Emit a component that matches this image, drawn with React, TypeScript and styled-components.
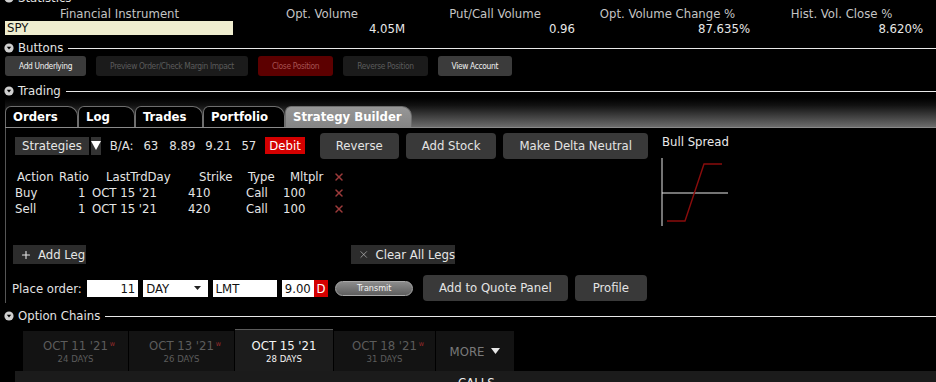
import styled, { createGlobalStyle } from "styled-components";
import { Plus, X } from "lucide-react";

const GlobalStyle = createGlobalStyle`
  html, body {
    margin: 0;
    padding: 0;
    background: #000;
  }
  body {
    width: 936px;
    height: 382px;
    overflow: hidden;
    font-family: "DejaVu Sans Condensed", "DejaVu Sans", sans-serif;
    font-stretch: condensed;
    font-size: 13px;
    color: #dedede;
    white-space: nowrap;
  }
  * {
    box-sizing: border-box;
  }
`;

const stats = [
  { label: "Opt. Volume", value: "4.05M", w: 176 },
  { label: "Put/Call Volume", value: "0.96", w: 170 },
  { label: "Opt. Volume Change %", value: "87.635%", w: 175 },
  { label: "Hist. Vol. Close %", value: "8.620%", w: 173 },
];

const legs = [
  { action: "Buy", ratio: "1", day: "OCT 15 '21", strike: "410", type: "Call", mult: "100" },
  { action: "Sell", ratio: "1", day: "OCT 15 '21", strike: "420", type: "Call", mult: "100" },
];

const expiries = [
  { date: "OCT 11 '21", days: "24 DAYS", weekly: true, w: 105 },
  { date: "OCT 13 '21", days: "26 DAYS", weekly: true, w: 105 },
  { date: "OCT 15 '21", days: "28 DAYS", weekly: false, w: 98, active: true },
  { date: "OCT 18 '21", days: "31 DAYS", weekly: true, w: 101 },
];

function SectionIcon() {
  return (
    <svg width="10" height="10" viewBox="0 0 10 10">
      <circle cx="5" cy="5" r="4.6" fill="#cfcfcf" />
      <polygon points="2.8,3.8 7.2,3.8 5,6.6" fill="#000" />
    </svg>
  );
}

function Section({ title, mt }: { title: string; mt: number }) {
  return (
    <SectionHeader $mt={mt}>
      <SectionIcon />
      <span>{title}</span>
      <SectionLine />
    </SectionHeader>
  );
}

function RemoveIcon() {
  return <X size={12} strokeWidth={3} color="#9c3a3a" />;
}

export default function App() {
  return (
    <Page>
      <GlobalStyle />
      <Section title="Statistics" mt={-9} />
      <StatsGrid>
        <StatHead $w={229}>Financial Instrument</StatHead>
        {stats.map((s) => (
          <StatHead key={s.label} $w={s.w}>
            {s.label}
          </StatHead>
        ))}
        <SymbolCell>SPY</SymbolCell>
        {stats.map((s) => (
          <StatValue key={s.label}>{s.value}</StatValue>
        ))}
      </StatsGrid>

      <Section title="Buttons" mt={5} />
      <ButtonBar>
        <ToolButton $kind="normal">Add Underlying</ToolButton>
        <ToolButton $kind="disabled">Preview Order/Check Margin Impact</ToolButton>
        <ToolButton $kind="danger">Close Position</ToolButton>
        <ToolButton $kind="disabled">Reverse Position</ToolButton>
        <ToolButton $kind="normal">View Account</ToolButton>
      </ButtonBar>

      <Section title="Trading" mt={8} />
      <TradingPanel>
        <TabBar>
          <Tab $w={73}>Orders</Tab>
          <Tab $w={57}>Log</Tab>
          <Tab $w={68}>Trades</Tab>
          <Tab $w={82}>Portfolio</Tab>
          <Tab $w={127} $active>
            Strategy Builder
          </Tab>
        </TabBar>
        <TradingBody>
          <LeftCol>
            <StrategyRow>
              <StrategyBox>Strategies</StrategyBox>
              <ArrowBox>
                <svg width="10" height="9" viewBox="0 0 10 9">
                  <polygon points="0,0 10,0 5,9" fill="#fff" />
                </svg>
              </ArrowBox>
              <Quote $ml={9}>B/A:</Quote>
              <Quote $ml={10}>63</Quote>
              <Quote $ml={11}>8.89</Quote>
              <Quote $ml={10}>9.21</Quote>
              <Quote $ml={10}>57</Quote>
              <DebitTag>Debit</DebitTag>
              <StrategyButtons>
                <GrayButton>Reverse</GrayButton>
                <GrayButton>Add Stock</GrayButton>
                <GrayButton>Make Delta Neutral</GrayButton>
              </StrategyButtons>
            </StrategyRow>

            <LegTable>
              <LegCell $pl={2}>Action</LegCell>
              <LegCell $pl={2}>Ratio</LegCell>
              <LegCell $pl={18}>LastTrdDay</LegCell>
              <LegCell $pl={19}>Strike</LegCell>
              <LegCell $pl={8}>Type</LegCell>
              <LegCell $pl={7}>Mltplr</LegCell>
              <LegCell $pl={3}>
                <RemoveIcon />
              </LegCell>
              {legs.map((l) => (
                <LegRow key={l.action}>
                  <LegCell $pl={0}>{l.action}</LegCell>
                  <LegCell $pl={21}>{l.ratio}</LegCell>
                  <LegCell $pl={4}>{l.day}</LegCell>
                  <LegCell $pl={8}>{l.strike}</LegCell>
                  <LegCell $pl={6}>{l.type}</LegCell>
                  <LegCell $pl={0}>{l.mult}</LegCell>
                  <LegCell $pl={3}>
                    <RemoveIcon />
                  </LegCell>
                </LegRow>
              ))}
            </LegTable>

            <LegActions>
              <FlatButton $w={73}>
                <Plus size={12} strokeWidth={2.2} color="#e6e6e6" />
                Add Leg
              </FlatButton>
              <FlatButton $w={104} $ml={265}>
                <X size={13} strokeWidth={1.3} color="#cfcfcf" />
                Clear All Legs
              </FlatButton>
            </LegActions>

            <OrderRow>
              <OrderLabel>Place order:</OrderLabel>
              <Field $w={53} $align="right">11</Field>
              <Field $w={66} $ml={5}>
                DAY
                <svg width="7" height="4" viewBox="0 0 7 4">
                  <polygon points="0,0 7,0 3.5,4" fill="#222" />
                </svg>
              </Field>
              <Field $w={66} $ml={5}>LMT</Field>
              <Field $w={32} $ml={5} $align="right">9.00</Field>
              <SideTag>D</SideTag>
              <TransmitPill>Transmit</TransmitPill>
              <GrayButton $ml={10}>Add to Quote Panel</GrayButton>
              <GrayButton $ml={7} $pad={18}>Profile</GrayButton>
            </OrderRow>
          </LeftCol>

          <ChartCol>
            <ChartTitle>Bull Spread</ChartTitle>
            <svg width="72" height="72" viewBox="0 0 72 72">
              <line x1="2" y1="2" x2="2" y2="70" stroke="#e8e8e8" strokeWidth="1" />
              <line x1="2" y1="37" x2="68" y2="37" stroke="#e8e8e8" strokeWidth="1" />
              <polyline
                points="7,65 25,65 44,8 62,8"
                fill="none"
                stroke="#8a0c0c"
                strokeWidth="1.4"
              />
            </svg>
          </ChartCol>
        </TradingBody>
      </TradingPanel>

      <Section title="Option Chains" mt={6} />
      <ExpiryTabs>
        {expiries.map((e) => (
          <ExpiryTab key={e.date} $w={e.w} $active={e.active}>
            <ExpiryDate>
              {e.date}
              {e.weekly && <Weekly>w</Weekly>}
            </ExpiryDate>
            <ExpiryDays>{e.days}</ExpiryDays>
          </ExpiryTab>
        ))}
        <MoreTab $w={78}>
          MORE
          <svg width="9" height="6" viewBox="0 0 9 6">
            <polygon points="0,0 9,0 4.5,6" fill="#e6e6e6" />
          </svg>
        </MoreTab>
      </ExpiryTabs>
      <ChainPanel>CALLS</ChainPanel>
    </Page>
  );
}

const Page = styled.div`
  width: 936px;
  display: flex;
  flex-direction: column;
`;

const SectionHeader = styled.div<{ $mt: number }>`
  display: flex;
  align-items: center;
  gap: 4px;
  height: 14px;
  margin-top: ${(p) => p.$mt}px;
  padding-left: 4px;
  color: #e4e4e4;
  font-size: 13px;
  line-height: 14px;
`;

const SectionLine = styled.div`
  flex: 1;
  height: 1px;
  background: #e8e8e8;
  margin-left: 1px;
`;

const StatsGrid = styled.div`
  display: grid;
  grid-template-columns: 229px 176px 170px 175px 173px;
  grid-template-rows: 15px 15px;
  margin: 1px 0 0 5px;
`;

const StatHead = styled.div<{ $w: number }>`
  width: ${(p) => p.$w}px;
  text-align: center;
  color: #c4c4c4;
  line-height: 15px;
`;

const SymbolCell = styled.div`
  height: 14px;
  line-height: 14px;
  background: #efedcf;
  color: #111;
  padding-left: 2px;
  margin-right: 1px;
`;

const StatValue = styled.div`
  text-align: right;
  padding-right: 5px;
  color: #e8e8e8;
  line-height: 15px;
`;

const ButtonBar = styled.div`
  display: flex;
  gap: 10px;
  padding-left: 5px;
  margin-top: 1px;
`;

const ToolButton = styled.div<{ $kind: "normal" | "disabled" | "danger" }>`
  height: 20px;
  line-height: 20px;
  padding: 0 14px;
  border-radius: 3px;
  font-size: 8.4px;
  letter-spacing: -0.35px;
  background: ${(p) =>
    p.$kind === "danger" ? "#5c0000" : p.$kind === "disabled" ? "#1b1b1b" : "#3b3b3b"};
  color: ${(p) =>
    p.$kind === "danger" ? "#a65252" : p.$kind === "disabled" ? "#5c5c5c" : "#f0f0f0"};
`;

const TradingPanel = styled.div`
  margin-left: 5px;
  display: flex;
  flex-direction: column;
`;

const TabBar = styled.div`
  display: flex;
  align-items: flex-end;
  height: 30px;
  background: linear-gradient(#000 0%, #111 25%, #6c6c6c 100%);
  border-bottom: 1px solid #8a8a8a;
`;

const Tab = styled.div<{ $w: number; $active?: boolean }>`
  width: ${(p) => p.$w}px;
  height: 21px;
  padding-left: 7px;
  border: 1px solid #6e6e6e;
  border-bottom: none;
  border-radius: 6px 10px 0 0;
  background: ${(p) => (p.$active ? "linear-gradient(#979797, #858585)" : "#000")};
  color: #fff;
  font-weight: bold;
  font-size: 13px;
  line-height: 20px;
`;

const TradingBody = styled.div`
  display: flex;
  border-left: 1px solid #555;
  padding: 5px 0 2px 9px;
`;

const LeftCol = styled.div`
  width: 632px;
  display: flex;
  flex-direction: column;
`;

const StrategyRow = styled.div`
  display: flex;
  align-items: center;
  height: 25px;
`;

const StrategyBox = styled.div`
  height: 18px;
  line-height: 18px;
  padding: 0 7px;
  background: #333;
  color: #e8e8e8;
`;

const ArrowBox = styled.div`
  width: 19px;
  height: 18px;
  margin-left: 2px;
  background: #333;
  display: flex;
  align-items: center;
  justify-content: center;
`;

const Quote = styled.span<{ $ml: number }>`
  margin-left: ${(p) => p.$ml}px;
  color: #e2e2e2;
`;

const DebitTag = styled.span`
  margin-left: 9px;
  height: 17px;
  line-height: 17px;
  padding: 0 4px;
  background: #d40000;
  color: #fff;
`;

const StrategyButtons = styled.div`
  display: flex;
  gap: 7px;
  margin-left: 15px;
`;

const GrayButton = styled.div<{ $ml?: number; $pad?: number }>`
  height: 26px;
  line-height: 26px;
  padding: 0 ${(p) => p.$pad ?? 16}px;
  margin-left: ${(p) => p.$ml ?? 0}px;
  border-radius: 4px;
  background: #393939;
  color: #e4e4e4;
`;

const LegTable = styled.div`
  display: grid;
  grid-template-columns: 42px 31px 92px 60px 43px 47px 20px;
  grid-auto-rows: 16px;
  margin-top: 11px;
  color: #e6e6e6;
`;

const LegRow = styled.div`
  display: contents;
`;

const LegCell = styled.div<{ $pl: number }>`
  padding-left: ${(p) => p.$pl}px;
  line-height: 16px;
  display: flex;
  align-items: center;
`;

const LegActions = styled.div`
  display: flex;
  margin: 28px 0 0 -2px;
`;

const FlatButton = styled.div<{ $w: number; $ml?: number }>`
  width: ${(p) => p.$w}px;
  height: 19px;
  margin-left: ${(p) => p.$ml ?? 0}px;
  display: flex;
  align-items: center;
  gap: 6px;
  padding-left: 7px;
  background: #2c2c2c;
  color: #e6e6e6;
`;

const OrderRow = styled.div`
  display: flex;
  align-items: center;
  height: 26px;
  margin: 11px 0 0 -3px;
`;

const OrderLabel = styled.span`
  color: #e2e2e2;
  margin-right: 5px;
`;

const Field = styled.div<{ $w: number; $ml?: number; $align?: "left" | "right" }>`
  width: ${(p) => p.$w}px;
  height: 17px;
  margin-left: ${(p) => p.$ml ?? 0}px;
  padding: 0 3px;
  background: #fff;
  color: #111;
  display: flex;
  align-items: center;
  justify-content: ${(p) => (p.$align === "right" ? "flex-end" : "space-between")};
  svg {
    margin-right: 4px;
  }
`;

const SideTag = styled.div`
  width: 15px;
  height: 17px;
  line-height: 17px;
  text-align: center;
  background: #d40000;
  color: #fff;
`;

const TransmitPill = styled.div`
  width: 80px;
  height: 15px;
  margin-left: 7px;
  border-radius: 8px;
  border: 1px solid #a8a8a8;
  background: linear-gradient(#8c8c8c, #5e5e5e);
  color: #f2f2f2;
  font-size: 9px;
  line-height: 13px;
  text-align: center;
`;

const ChartCol = styled.div`
  margin-left: 15px;
  display: flex;
  flex-direction: column;
  svg {
    margin: 7px 0 0 -2px;
  }
`;

const ChartTitle = styled.div`
  color: #eaeaea;
  line-height: 15px;
  margin-top: 1px;
`;

const ExpiryTabs = styled.div`
  display: flex;
  align-items: flex-end;
  gap: 1px;
  margin: 6px 0 0 23px;
  height: 42px;
`;

const ExpiryTab = styled.div<{ $w: number; $active?: boolean }>`
  width: ${(p) => p.$w}px;
  height: ${(p) => (p.$active ? 42 : 40)}px;
  background: ${(p) => (p.$active ? "#1c1c1c" : "#131313")};
  border-top: ${(p) => (p.$active ? "1px solid #5a5a5a" : "none")};
  color: ${(p) => (p.$active ? "#f4f4f4" : "#5c5c5c")};
  display: flex;
  flex-direction: column;
  align-items: center;
  justify-content: center;
  padding-top: ${(p) => (p.$active ? 1 : 0)}px;
`;

const ExpiryDate = styled.div`
  font-size: 13px;
  line-height: 15px;
  position: relative;
`;

const Weekly = styled.span`
  position: absolute;
  top: -1px;
  right: -7px;
  font-size: 7px;
  color: #9a2c2c;
`;

const ExpiryDays = styled.div`
  font-size: 9.5px;
  line-height: 11px;
`;

const MoreTab = styled.div<{ $w: number }>`
  width: ${(p) => p.$w}px;
  height: 40px;
  background: #131313;
  color: #7a7a7a;
  display: flex;
  align-items: center;
  justify-content: center;
  gap: 7px;
`;

const ChainPanel = styled.div`
  margin-left: 15px;
  height: 20px;
  background: #1b1b1b;
  color: #eee;
  padding: 5px 0 0 443px;
  line-height: 13px;
`;
